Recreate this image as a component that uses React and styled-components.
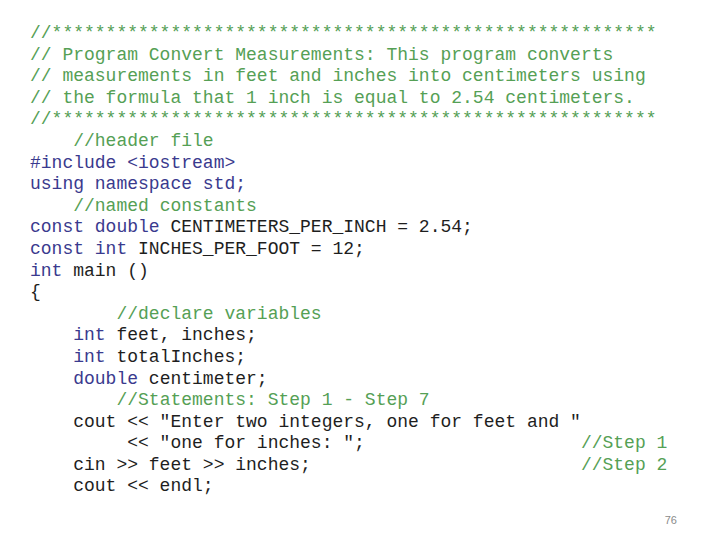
import styled, { createGlobalStyle } from "styled-components"

const GlobalStyle = createGlobalStyle`
html, body {
    margin: 0;
    padding: 0;
    background: #FFFFFF;
}
`

const colors = {
    comment: "#55A055",
    keyword: "#3A3A8E",
    plain: "#1E1E1E",
}

// each line is a list of [kind, text] pieces
const lines = [
    [["comment", "//********************************************************"]],
    [["comment", "// Program Convert Measurements: This program converts"]],
    [["comment", "// measurements in feet and inches into centimeters using"]],
    [["comment", "// the formula that 1 inch is equal to 2.54 centimeters."]],
    [["comment", "//********************************************************"]],
    [["plain", "    "], ["comment", "//header file"]],
    [["keyword", "#include <iostream>"]],
    [["keyword", "using namespace std;"]],
    [["plain", "    "], ["comment", "//named constants"]],
    [["keyword", "const double"], ["plain", " CENTIMETERS_PER_INCH = 2.54;"]],
    [["keyword", "const int"], ["plain", " INCHES_PER_FOOT = 12;"]],
    [["keyword", "int"], ["plain", " main ()"]],
    [["plain", "{"]],
    [["plain", "        "], ["comment", "//declare variables"]],
    [["plain", "    "], ["keyword", "int"], ["plain", " feet, inches;"]],
    [["plain", "    "], ["keyword", "int"], ["plain", " totalInches;"]],
    [["plain", "    "], ["keyword", "double"], ["plain", " centimeter;"]],
    [["plain", "        "], ["comment", "//Statements: Step 1 - Step 7"]],
    [["plain", '    cout << "Enter two integers, one for feet and "']],
    [["plain", '         << "one for inches: ";                    '], ["comment", "//Step 1"]],
    [["plain", "    cin >> feet >> inches;                         "], ["comment", "//Step 2"]],
    [["plain", "    cout << endl;"]],
]

function App() {
    return (
        <>
            <GlobalStyle />
            <Slide>
                <Code>
                    {lines.map((line, i) => (
                        <Line key={i}>
                            {line.map(([kind, text], j) => <Token key={j} kind={kind}>{text}</Token>)}
                        </Line>
                    ))}
                </Code>
                <Footer>
                    <PageNumber>76</PageNumber>
                </Footer>
            </Slide>
        </>
    )
}

const Slide = styled.div`
width: 720px;
height: 540px;
display: flex;
flex-direction: column;
justify-content: space-between;
box-sizing: border-box;
padding: 23px 0 14px 30px;
background: #FFFFFF;
`
const Code = styled.pre`
margin: 0;
font-family: "Liberation Mono", "Courier New", monospace;
font-size: 18px;
line-height: 21.6px;
`
const Line = styled.div`
white-space: pre;
height: 21.6px;
`
const Token = styled.span`
color: ${props => colors[props.kind]};
`
const Footer = styled.div`
display: flex;
justify-content: flex-end;
padding-right: 43px;
`
const PageNumber = styled.span`
font-family: "Liberation Sans", Arial, sans-serif;
font-size: 11px;
color: #8A8A8A;
`

export default App;
